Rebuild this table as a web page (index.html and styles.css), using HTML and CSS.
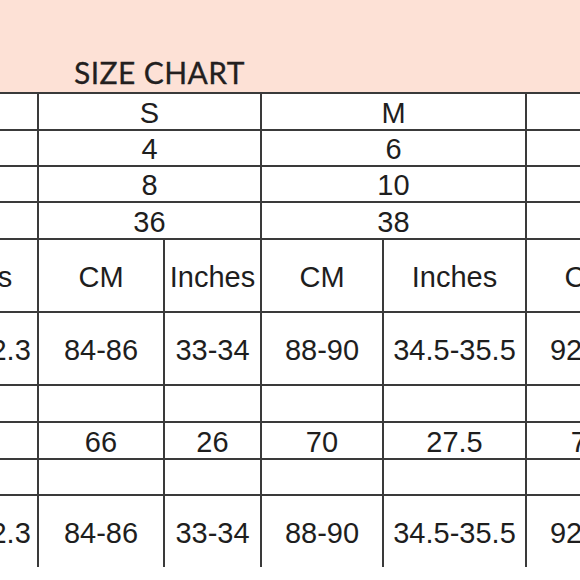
FILE: index.html
```html
<!DOCTYPE html>
<html>
<head>
<meta charset="utf-8">
<link rel="stylesheet" href="styles.css">
</head>
<body>
<div class="sheet">
  <div class="banner"><h1 class="title">SIZE CHART</h1></div>
  <div class="grid-wrap">
    <div class="chart">
      <div class="cell"></div><div class="cell span2">S</div><div class="cell span2">M</div><div class="cell span2"></div>
      <div class="cell"></div><div class="cell span2">4</div><div class="cell span2">6</div><div class="cell span2"></div>
      <div class="cell"></div><div class="cell span2">8</div><div class="cell span2">10</div><div class="cell span2"></div>
      <div class="cell"></div><div class="cell span2">36</div><div class="cell span2">38</div><div class="cell span2"></div>

      <div class="cell">Inches</div><div class="cell">CM</div><div class="cell">Inches</div><div class="cell">CM</div><div class="cell">Inches</div><div class="cell">CM</div><div class="cell"></div>
      <div class="cell">31.5-32.3</div><div class="cell">84-86</div><div class="cell">33-34</div><div class="cell">88-90</div><div class="cell">34.5-35.5</div><div class="cell">92-94</div><div class="cell"></div>
      <div class="cell"></div><div class="cell"></div><div class="cell"></div><div class="cell"></div><div class="cell"></div><div class="cell"></div><div class="cell"></div>
      <div class="cell"></div><div class="cell">66</div><div class="cell">26</div><div class="cell">70</div><div class="cell">27.5</div><div class="cell">74</div><div class="cell"></div>
      <div class="cell"></div><div class="cell"></div><div class="cell"></div><div class="cell"></div><div class="cell"></div><div class="cell"></div><div class="cell"></div>
      <div class="cell">31.5-32.3</div><div class="cell">84-86</div><div class="cell">33-34</div><div class="cell">88-90</div><div class="cell">34.5-35.5</div><div class="cell">92-94</div><div class="cell"></div>
    </div>
  </div>
</div>
</body>
</html>
```
FILE: styles.css
```css
html, body {
  margin: 0;
  padding: 0;
  background: #ffffff;
}

.sheet {
  width: 580px;
  height: 580px;
  overflow: hidden;
  background: #ffffff;
}

.banner {
  height: 92px;
  background: #fde1d6;
  box-sizing: border-box;
  padding-left: 74px;
  display: flex;
  align-items: flex-end;
}

.title {
  margin: 0 0 3px 0;
  font-family: Lato, "Open Sans", sans-serif;
  font-weight: 400;
  font-size: 30px;
  line-height: 34px;
  color: #231f1f;
  letter-spacing: 0.4px;
  -webkit-text-stroke: 0.3px #231f1f;
}

.grid-wrap {
  width: 580px;
  overflow: hidden;
}

.chart {
  margin-left: -98px;
  width: max-content;
  display: grid;
  grid-template-columns: 135px 124px 95px 120px 141px 120px 95px;
  grid-template-rows: 35px 34px 34px 35px 71px 71px 35px 35px 34px 71px;
  gap: 2px;
  border-top: 2px solid #3a3a3a;
  background: #3a3a3a;
}

.cell {
  background: #ffffff;
  display: flex;
  align-items: center;
  justify-content: center;
  padding-top: 3px;
  box-sizing: border-box;
  font-family: "Liberation Sans", Arial, sans-serif;
  font-size: 29px;
  line-height: 1;
  color: #1e1e1e;
  white-space: nowrap;
  overflow: hidden;
}

.span2 {
  grid-column: span 2;
}
```
